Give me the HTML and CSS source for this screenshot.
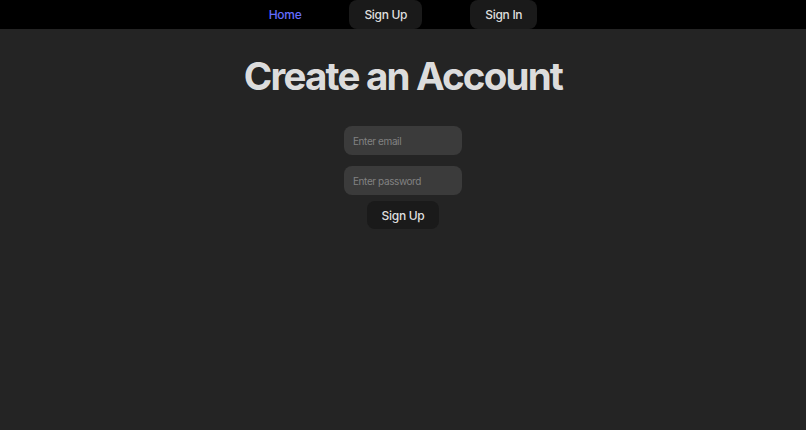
FILE: index.html
```html
<!DOCTYPE html>
<html lang="en">
<head>
<meta charset="utf-8">
<title>Create an Account</title>
<link rel="stylesheet" href="styles.css">
</head>
<body>
<nav class="topbar">
  <a class="nav-link" href="#">Home</a>
  <button class="btn">Sign Up</button>
  <button class="btn">Sign In</button>
</nav>
<main class="page">
  <h1 class="title">Create an Account</h1>
  <form class="form">
    <input class="field" type="email" placeholder="Enter email">
    <input class="field" type="password" placeholder="Enter password">
    <button class="btn submit" type="button">Sign Up</button>
  </form>
</main>
</body>
</html>
```
FILE: styles.css
```css
html, body {
  margin: 0;
  padding: 0;
}
body {
  background: #242424;
  color: rgba(255, 255, 255, 0.87);
  font-family: Inter, "Noto Sans", sans-serif;
  height: 430px;
}
.topbar {
  display: flex;
  justify-content: center;
  align-items: center;
  gap: 48px;
  height: 29px;
  background: #000;
}
.nav-link {
  color: #646cff;
  text-decoration: none;
  font-size: 12px;
  font-weight: 500;
  letter-spacing: -0.3px;
}
.btn {
  font-family: Inter, "Noto Sans", sans-serif;
  font-size: 12px;
  font-weight: 500;
  letter-spacing: -0.3px;
  color: rgba(255, 255, 255, 0.87);
  background: #1a1a1a;
  border: 1px solid transparent;
  border-radius: 8px;
  height: 29px;
  padding: 0 14px;
  cursor: pointer;
}
.page {
  display: flex;
  flex-direction: column;
  align-items: center;
}
.title {
  margin: 26px 0 0;
  font-size: 38.5px;
  line-height: 1.1;
  font-weight: 700;
  letter-spacing: -1.8px;
  color: rgba(255, 255, 255, 0.87);
}
.form {
  display: flex;
  flex-direction: column;
  align-items: center;
  margin-top: 29px;
}
.field {
  box-sizing: border-box;
  width: 118px;
  height: 29px;
  margin-bottom: 11px;
  padding: 0 9px;
  border: none;
  border-radius: 8px;
  background: #3b3b3b;
  color: #ddd;
  font-family: Inter, "Noto Sans", sans-serif;
  font-size: 10px;
  letter-spacing: -0.4px;
  outline: none;
}
.field:last-of-type {
  margin-bottom: 6px;
}
.field::placeholder {
  color: #828282;
}
.submit {
  height: 28px;
}
```
